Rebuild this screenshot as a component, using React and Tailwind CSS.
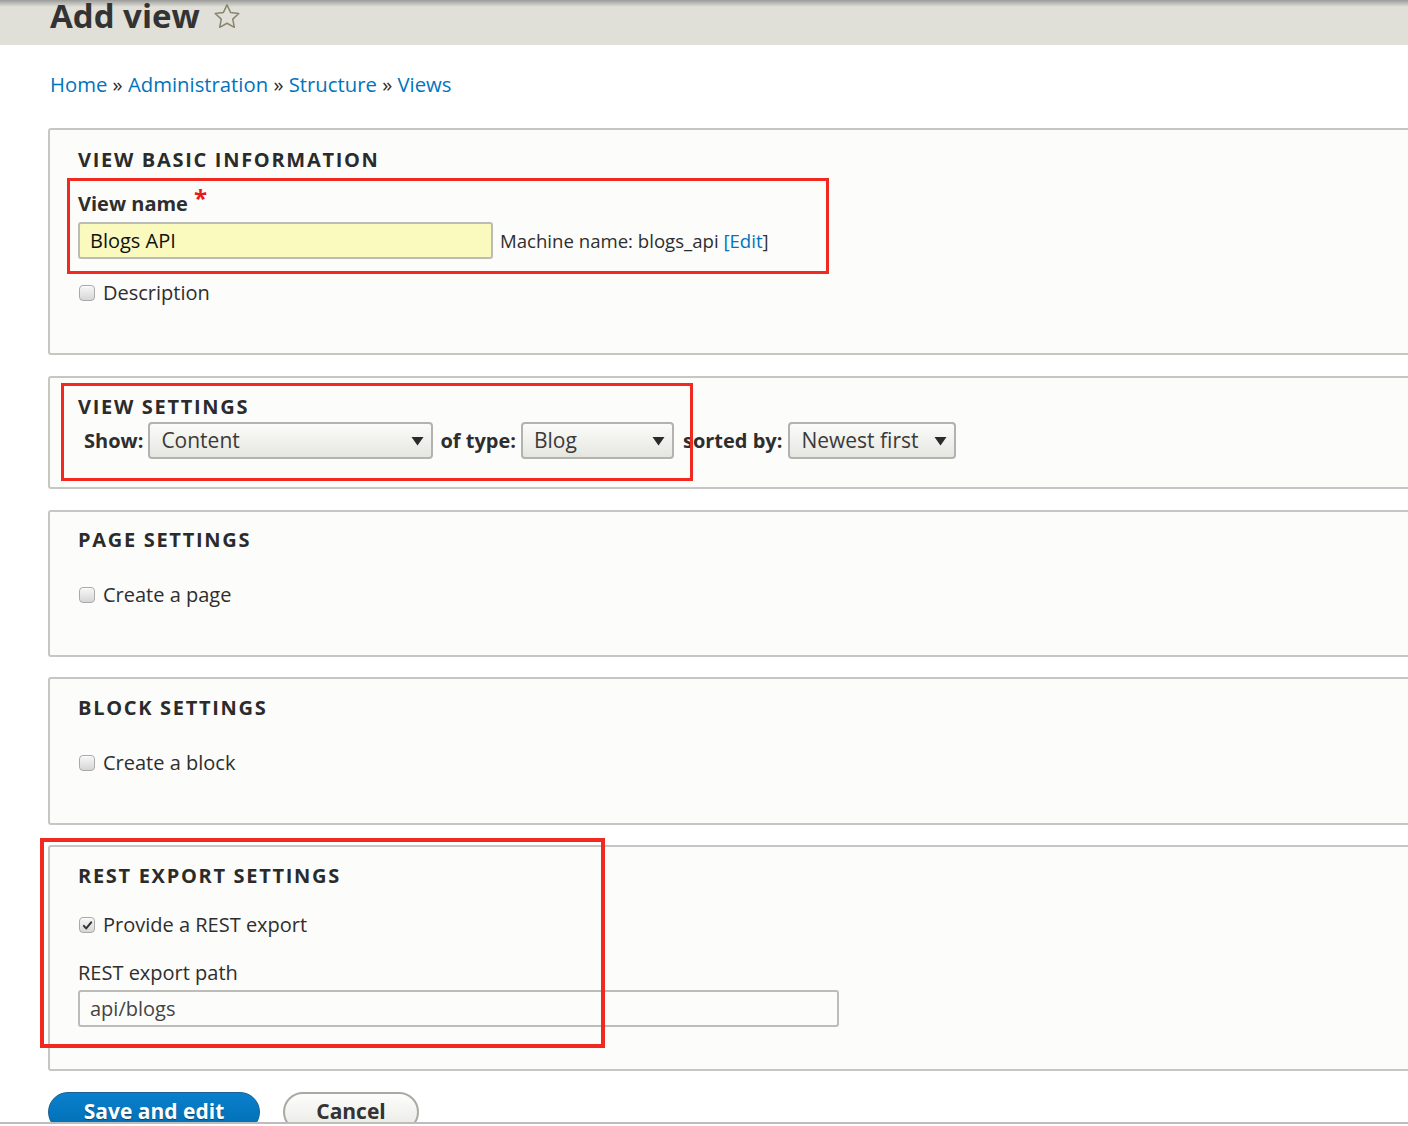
import React from "react";

function Checkbox({ checked }) {
  return (
    <span className="w-[16px] h-[16px] rounded-[4px] border border-[#a9a9a9] bg-gradient-to-b from-[#f7f7f7] to-[#d6d6d6] flex items-center justify-center shadow-[inset_0_1px_1px_rgba(255,255,255,0.8)]">
      {checked && (
        <svg width="11" height="11" viewBox="0 0 12 12">
          <path d="M2 6.4l2.6 2.8L10 2.6" fill="none" stroke="#333" strokeWidth="2.2" strokeLinecap="round" strokeLinejoin="round" />
        </svg>
      )}
    </span>
  );
}

function CheckRow({ label, checked, className = "" }) {
  return (
    <div className={`flex items-center gap-[8px] leading-[28px] pl-[1px] ${className}`}>
      <Checkbox checked={checked} />
      <span>{label}</span>
    </div>
  );
}

function Select({ value, width }) {
  return (
    <div
      className={`flex items-center justify-between h-[37px] border-2 border-[#b2b2ae] rounded-[4px] bg-gradient-to-b from-[#fbfbf9] to-[#e6e6e1] pl-[11px] pr-[7px] text-[21px] text-[#3a3a3a] ${width}`}
    >
      <span>{value}</span>
      <svg width="13" height="10" viewBox="0 0 13 10">
        <path d="M0.5 1h12L6.5 9.5z" fill="#2a2a2a" />
      </svg>
    </div>
  );
}

function Legend({ children }) {
  return (
    <div className="leading-[28px] text-[20px] font-bold uppercase tracking-[1.7px] text-[#2b2b2b]">
      {children}
    </div>
  );
}

function Fieldset({ className = "", children }) {
  return (
    <div className={`w-[1400px] border-2 border-[#c6c6c2] rounded-[3px] bg-[#fcfcfa] pl-[28px] ${className}`}>
      {children}
    </div>
  );
}

export default function App() {
  return (
    <div className="relative w-[1408px] h-[1126px] overflow-hidden bg-white text-[#2e2e2e] text-[20px] font-['Open_Sans',sans-serif]">
      {/* header */}
      <div className="h-[45px] overflow-hidden bg-[linear-gradient(#9a9a9a,#c4c4bf_4px,#e0e0d9_7px)] pl-[50px] flex items-start">
        <h1 className="text-[33px] font-bold leading-[31px] text-[#333]">Add view</h1>
        <svg className="ml-[12px] mt-[2px]" width="30" height="30" viewBox="0 0 24 24">
          <path
            d="M12 2.3l2.85 6.05 6.6.8-4.85 4.55 1.25 6.55L12 17l-5.85 3.25 1.25-6.55L2.55 9.15l6.6-.8z"
            fill="none"
            stroke="#86866e"
            strokeWidth="1.2"
            strokeLinejoin="round"
          />
        </svg>
      </div>

      {/* breadcrumb */}
      <div className="mt-[25px] pl-[50px] leading-[28px] text-[20.3px]">
        <a className="text-[#0074bd]">Home</a> <span>»</span>{" "}
        <a className="text-[#0074bd]">Administration</a> <span>»</span>{" "}
        <a className="text-[#0074bd]">Structure</a> <span>»</span>{" "}
        <a className="text-[#0074bd]">Views</a>
      </div>

      <div className="ml-[48px] mt-[30px]">
        <Fieldset className="pt-[16px] pb-[46px]">
          <Legend>View basic information</Legend>
          <div className="mt-[16px] h-[28px] leading-[28px] font-bold">
            View name<span className="ml-[6px] text-[#e51b1b] text-[24px] leading-[0] font-bold relative -top-[4px]">*</span>
          </div>
          <div className="mt-[4px] flex items-center gap-[7px]">
            <div className="w-[415px] h-[37px] border-2 border-[#bcbcb6] rounded-[3px] bg-[#fafabf] pl-[10px] flex items-center text-[20px] text-[#111]">
              Blogs API
            </div>
            <span className="text-[18.6px]">
              Machine name: blogs_api <span className="text-[#0074bd]">[</span>
              <a className="text-[#0074bd]">Edit</a>
              <span className="text-[#333]">]</span>
            </span>
          </div>
          <CheckRow label="Description" className="mt-[20px]" />
        </Fieldset>

        <Fieldset className="mt-[21px] pt-[15px] pb-[28px]">
          <Legend>View settings</Legend>
          <div className="mt-[1px] pl-[6px] flex items-center font-bold">
            <span>Show:</span>
            <div className="ml-[5px] font-normal">
              <Select value="Content" width="w-[285px]" />
            </div>
            <span className="ml-[7px]">of type:</span>
            <div className="ml-[5px] font-normal">
              <Select value="Blog" width="w-[153px]" />
            </div>
            <span className="ml-[9px]">sorted by:</span>
            <div className="ml-[6px] font-normal">
              <Select value="Newest first" width="w-[168px]" />
            </div>
          </div>
        </Fieldset>

        <Fieldset className="mt-[21px] pt-[14px] pb-[46px]">
          <Legend>Page settings</Legend>
          <CheckRow label="Create a page" className="mt-[27px]" />
        </Fieldset>

        <Fieldset className="mt-[20px] pt-[15px] pb-[46px]">
          <Legend>Block settings</Legend>
          <CheckRow label="Create a block" className="mt-[27px]" />
        </Fieldset>

        <Fieldset className="mt-[20px] pt-[15px] pb-[42px]">
          <Legend>REST export settings</Legend>
          <CheckRow label="Provide a REST export" checked className="mt-[21px]" />
          <div className="mt-[20px] leading-[28px]">REST export path</div>
          <div className="mt-[3px] w-[761px] h-[37px] border-2 border-[#bcbcb8] rounded-[3px] bg-[#fcfcfa] pl-[10px] flex items-center text-[#444]">
            api/blogs
          </div>
        </Fieldset>

        <div className="mt-[21px] flex gap-[23px]">
          <button className="h-[40px] w-[212px] rounded-full border border-[#1b5f94] bg-gradient-to-b from-[#0a7fcc] to-[#006fb3] text-white text-[21px] font-bold [text-shadow:0_1px_1px_rgba(0,0,0,0.4)]">
            Save and edit
          </button>
          <button className="h-[40px] w-[136px] rounded-full border-2 border-[#aaa9a4] bg-gradient-to-b from-[#fdfdfc] to-[#e8e8e3] text-[#333] text-[21px] font-bold">
            Cancel
          </button>
        </div>
      </div>

      {/* bottom edge */}
      <div className="absolute left-0 top-[1122px] w-full h-[4px] bg-white border-t-2 border-[#bdbdbd]" />

      {/* annotation boxes */}
      <div className="absolute left-[67px] top-[178px] w-[762px] h-[96px] border-[3px] border-[#f02a20]" />
      <div className="absolute left-[61px] top-[383px] w-[632px] h-[98px] border-[3px] border-[#f02a20]" />
      <div className="absolute left-[40px] top-[838px] w-[565px] h-[210px] border-[4px] border-[#f02a20]" />
    </div>
  );
}
